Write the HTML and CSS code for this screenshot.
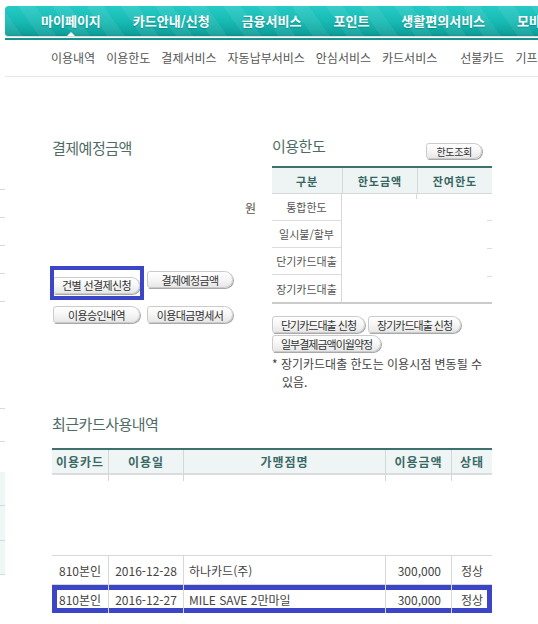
FILE: index.html
```html
<!DOCTYPE html>
<html lang="ko">
<head>
<meta charset="utf-8">
<title>마이페이지 - 이용내역</title>
<link rel="stylesheet" href="styles.css">
</head>
<body>
<div class="page">
  <header class="header">
    <nav class="gnb">
      <a class="gnb-item active">마이페이지</a>
      <a class="gnb-item">카드안내/신청</a>
      <a class="gnb-item">금융서비스</a>
      <a class="gnb-item">포인트</a>
      <a class="gnb-item">생활편의서비스</a>
      <a class="gnb-item">모바일</a>
    </nav>
    <div class="gnb-line"></div>
    <nav class="lnb">
      <a class="lnb-item">이용내역</a>
      <a class="lnb-item">이용한도</a>
      <a class="lnb-item">결제서비스</a>
      <a class="lnb-item">자동납부서비스</a>
      <a class="lnb-item">안심서비스</a>
      <a class="lnb-item">카드서비스</a>
      <a class="lnb-item lnb-wide">선불카드</a>
      <a class="lnb-item">기프트카드</a>
    </nav>
  </header>

  <div class="content">
    <aside class="side">
      <div class="side-top"></div>
      <div class="side-row"></div>
      <div class="side-row"></div>
      <div class="side-row"></div>
      <div class="side-row"></div>
      <div class="side-gap"></div>
      <div class="side-row2"></div>
      <div class="side-box">
        <div class="side-box-row"></div>
        <div class="side-box-row tall"></div>
        <div class="side-box-row"></div>
      </div>
    </aside>

    <main class="main">
      <section class="summary">
        <div class="pay">
          <h2 class="sec-title">결제예정금액</h2>
          <div class="amount">원</div>
          <div class="pay-btns">
            <span class="hl"><a class="btn">건별 선결제신청</a></span>
            <a class="btn">결제예정금액</a>
            <a class="btn">이용승인내역</a>
            <a class="btn">이용대금명세서</a>
          </div>
        </div>

        <div class="limit-box">
          <div class="limit-head">
            <h2 class="sec-title small">이용한도</h2>
            <a class="btn btn-sm">한도조회</a>
          </div>
          <table class="limit">
            <colgroup><col class="c1"><col class="c2"><col class="c3"></colgroup>
            <thead>
              <tr><th>구분</th><th>한도금액</th><th>잔여한도</th></tr>
            </thead>
            <tbody>
              <tr><td class="lbl">통합한도</td><td class="merged" colspan="2" rowspan="4"></td></tr>
              <tr><td class="lbl">일시불/할부</td></tr>
              <tr><td class="lbl">단기카드대출</td></tr>
              <tr><td class="lbl last">장기카드대출</td></tr>
            </tbody>
          </table>
          <div class="limit-actions">
            <a class="btn btn-act">단기카드대출 신청</a>
            <a class="btn btn-act">장기카드대출 신청</a>
            <a class="btn btn-act">일부결제금액이월약정</a>
          </div>
          <p class="note">* 장기카드대출 한도는 이용시점 변동될 수<br>있음.</p>
        </div>
      </section>

      <section class="recent-sec">
        <h2 class="sec-title">최근카드사용내역</h2>
        <table class="recent">
          <colgroup>
            <col class="w-card"><col class="w-date"><col class="w-shop"><col class="w-amt"><col class="w-st">
          </colgroup>
          <thead>
            <tr><th>이용카드</th><th>이용일</th><th>가맹점명</th><th>이용금액</th><th>상태</th></tr>
          </thead>
          <tbody>
            <tr class="spacer"><td></td><td></td><td></td><td></td><td></td></tr>
            <tr class="data">
              <td>810본인</td><td>2016-12-28</td><td class="l">하나카드(주)</td><td class="r">300,000</td><td>정상</td>
            </tr>
            <tr class="data marked">
              <td>810본인</td><td>2016-12-27</td><td class="l">MILE SAVE 2만마일</td><td class="r">300,000</td><td>정상</td>
            </tr>
          </tbody>
        </table>
      </section>
    </main>
  </div>
</div>
</body>
</html>
```

FILE: styles.css
```css
* { box-sizing: border-box; }

html, body {
  margin: 0;
  padding: 0;
  background: #ffffff;
}

body {
  width: 538px;
  height: 624px;
  overflow: hidden;
  font-family: "Noto Sans CJK KR", "Noto Sans", sans-serif;
  color: #444;
}

a { text-decoration: none; color: inherit; cursor: pointer; }

.page { width: 538px; }

/* ---------- global nav ---------- */
.gnb {
  margin: 6px 0 0 5px;
  height: 30px;
  display: flex;
  align-items: center;
  gap: 32px;
  padding-left: 36px;
  overflow: hidden;
  white-space: nowrap;
  border-radius: 4px 0 0 3px;
  background:
    repeating-linear-gradient(55deg, rgba(255,255,255,0.07) 0 14px, rgba(255,255,255,0) 14px 28px),
    linear-gradient(#26cac5 0%, #17b8b2 55%, #0fa29d 90%, #0c918c 100%);
  box-shadow: 0 1px 1px rgba(0,0,0,0.15);
}

.gnb-item {
  position: relative;
  flex-shrink: 0;
  color: #ffffff;
  font-weight: bold;
  font-size: 13px;
  letter-spacing: 0;
  line-height: 30px;
  text-shadow: 0 1px 1px rgba(0,80,78,0.35);
}

.gnb-item.active::after {
  content: "";
  position: absolute;
  left: 50%;
  bottom: 0;
  margin-left: -4px;
  border-left: 4px solid transparent;
  border-right: 4px solid transparent;
  border-bottom: 4px solid #ffffff;
}

.gnb-line {
  margin: 2px 0 0 5px;
  height: 2px;
  background: #15948f;
}

/* ---------- local nav ---------- */
.lnb {
  margin-left: 5px;
  height: 37px;
  display: flex;
  align-items: center;
  gap: 11px;
  padding-left: 46px;
  border-bottom: 1px solid #e6e6e6;
  white-space: nowrap;
  overflow: hidden;
}

.lnb-item {
  flex-shrink: 0;
  font-size: 12px;
  letter-spacing: 0;
  color: #555;
  line-height: 36px;
}

.lnb-wide { margin-left: 12px; }

/* ---------- layout ---------- */
.content { display: flex; }

.side { width: 5px; flex-shrink: 0; }
.side-top { height: 113px; border-bottom: 1px solid #d9d9d9; }
.side-row { height: 28px; border-bottom: 1px solid #d9d9d9; }
.side-gap { height: 107px; border-bottom: 1px solid #d9d9d9; }
.side-row2 { height: 33px; border-bottom: 1px solid #d9d9d9; }
.side-box { margin-top: 30px; background: #eef6f6; }
.side-box-row { height: 34px; border-bottom: 1px solid #cfdcdc; }
.side-box-row.tall { height: 35px; }

.main { flex: 1; padding-left: 47px; }

.sec-title {
  margin: 0;
  font-size: 15px;
  font-weight: normal;
  letter-spacing: -0.5px;
  line-height: 22px;
  color: #4f6b66;
}

/* ---------- summary ---------- */
.summary {
  display: flex;
  padding-top: 60px;
}

.pay { width: 206px; flex-shrink: 0; }

.amount {
  margin-top: 39px;
  line-height: 20px;
  font-size: 12px;
  color: #555;
  text-align: right;
  padding-right: 2px;
}

.pay-btns {
  margin: 53px 0 0 1px;
  display: grid;
  grid-template-columns: 87px 86px;
  gap: 11px 7px;
}

.btn {
  display: inline-flex;
  align-items: center;
  justify-content: center;
  height: 17px;
  padding: 0 8px;
  font-size: 11px;
  letter-spacing: -0.6px;
  color: #333;
  white-space: nowrap;
  background: linear-gradient(#ffffff 0%, #f6f6f6 50%, #e7e7e7 100%);
  border: 1px solid #cbcbcb;
  border-radius: 3px 9px 9px 3px;
  box-shadow: 1px 1px 0 #a9a9a9;
}

.pay-btns .btn { width: 100%; }

.hl { position: relative; display: block; }
.hl .btn { width: 100%; }
.hl::after {
  content: "";
  position: absolute;
  top: -5px;
  bottom: -5px;
  left: -3px;
  right: -4px;
  border: 4px solid #3c45c6;
}

/* ---------- limit ---------- */
.limit-box { width: 220px; margin-left: 14px; flex-shrink: 0; }

.limit-head {
  height: 22px;
  display: flex;
  justify-content: space-between;
  align-items: flex-end;
}

.sec-title.small { align-self: flex-start; line-height: 18px; }

.btn-sm {
  height: 16px;
  margin-right: 10px;
  padding: 0 9px;
  font-size: 10px;
  letter-spacing: -0.3px;
}

.limit {
  margin-top: 7px;
  width: 220px;
  table-layout: fixed;
  border-collapse: separate;
  border-spacing: 0;
  border-top: 2px solid #3e716e;
  border-bottom: 2px solid #cbcbcb;
}

.limit col.c1 { width: 70px; }
.limit col.c2 { width: 75px; }
.limit col.c3 { width: 75px; }

.limit th {
  height: 26px;
  padding: 0;
  background: #eef3f3;
  border-bottom: 1px solid #d6d9d9;
  font-size: 11px;
  font-weight: bold;
  letter-spacing: 1px;
  color: #356662;
}

.limit th + th { border-left: 1px solid #d6d9d9; }

.limit td { padding: 0; }

.limit td.lbl {
  height: 27px;
  text-align: center;
  font-size: 11px;
  color: #555;
  border-bottom: 1px solid #dcdcdc;
  border-right: 1px solid #d6d9d9;
  white-space: nowrap;
}

.limit td.lbl.last { border-bottom: 0; }

.limit td.merged {
  background:
    linear-gradient(#d6d9d9, #d6d9d9) 74px 0 / 1px 5px no-repeat,
    linear-gradient(#dcdcdc, #dcdcdc) right 26px / 5px 1px no-repeat,
    linear-gradient(#dcdcdc, #dcdcdc) right 54px / 5px 1px no-repeat,
    linear-gradient(#dcdcdc, #dcdcdc) right 82px / 5px 1px no-repeat;
}

.limit-actions {
  margin-top: 12px;
  display: flex;
  flex-wrap: wrap;
  gap: 2px 3px;
}

.btn-act { padding: 0 8px; letter-spacing: -1px; }

.note {
  margin: 3px 0 0;
  padding-left: 10px;
  text-indent: -10px;
  font-size: 12px;
  letter-spacing: 0;
  line-height: 18px;
  color: #444;
  white-space: nowrap;
}

/* ---------- recent ---------- */
.recent-sec { margin-top: 22px; }

.recent {
  margin-top: 13px;
  width: 440px;
  table-layout: fixed;
  border-collapse: separate;
  border-spacing: 0;
  border-top: 2px solid #3e716e;
}

.recent col.w-card { width: 56px; }
.recent col.w-date { width: 75px; }
.recent col.w-shop { width: 202px; }
.recent col.w-amt { width: 66px; }
.recent col.w-st { width: 41px; }

.recent th {
  height: 25px;
  padding: 0;
  background: #eff4f4;
  border-bottom: 2px solid #d9dddd;
  font-size: 12px;
  font-weight: bold;
  letter-spacing: 1px;
  color: #3a6a66;
  white-space: nowrap;
  overflow: hidden;
}

.recent th + th { border-left: 1px solid #d3d8d8; }

.recent td { padding: 0; }

.recent tr.spacer td { height: 80px; }
.recent tr.spacer td + td {
  background: linear-gradient(#d5d5d5, #d5d5d5) left top / 1px 6px no-repeat;
}

.recent tr.data td {
  height: 29px;
  border-top: 1px solid #d8d8d8;
  font-size: 12px;
  color: #444;
  text-align: center;
  white-space: nowrap;
  overflow: hidden;
}

.recent tr.data td + td { border-left: 1px solid #d8d8d8; }
.recent tr.data td.l { text-align: left; padding-left: 5px; }
.recent tr.data td.r { text-align: right; padding-right: 10px; }

.recent tr.marked td {
  box-shadow: inset 0 5px 0 #3c45c6, inset 0 -5px 0 #3c45c6;
}
.recent tr.marked td:first-child {
  box-shadow: inset 5px 0 0 #3c45c6, inset 0 5px 0 #3c45c6, inset 0 -5px 0 #3c45c6;
}
.recent tr.marked td:last-child {
  box-shadow: inset -5px 0 0 #3c45c6, inset 0 5px 0 #3c45c6, inset 0 -5px 0 #3c45c6;
}
```
